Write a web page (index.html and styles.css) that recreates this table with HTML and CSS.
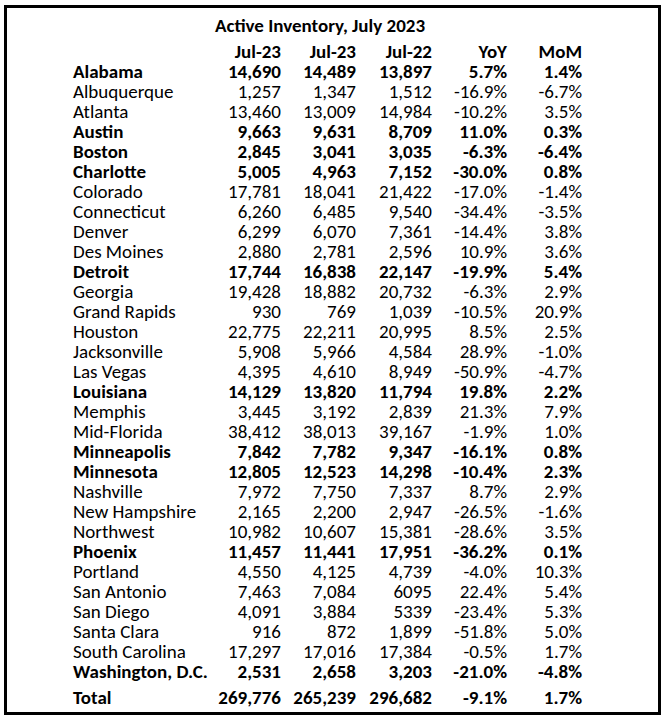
FILE: index.html
```html
<!DOCTYPE html>
<html>
<head>
<meta charset="utf-8">
<link rel="stylesheet" href="styles.css">
</head>
<body>
<div class="frame">
  <div class="title">Active Inventory, July 2023</div>
  <table class="inv">
    <colgroup><col class="c-name"><col class="c-num"><col class="c-num"><col class="c-num3"><col class="c-num"><col class="c-num"></colgroup>
    <thead>
      <tr class="b"><th class="name"></th><th>Jul-23</th><th>Jul-23</th><th>Jul-22</th><th>YoY</th><th>MoM</th></tr>
    </thead>
    <tbody>
      <tr class="b"><td class="name">Alabama</td><td>14,690</td><td>14,489</td><td>13,897</td><td>5.7%</td><td>1.4%</td></tr>
      <tr><td class="name">Albuquerque</td><td>1,257</td><td>1,347</td><td>1,512</td><td>-16.9%</td><td>-6.7%</td></tr>
      <tr><td class="name">Atlanta</td><td>13,460</td><td>13,009</td><td>14,984</td><td>-10.2%</td><td>3.5%</td></tr>
      <tr class="b"><td class="name">Austin</td><td>9,663</td><td>9,631</td><td>8,709</td><td>11.0%</td><td>0.3%</td></tr>
      <tr class="b"><td class="name">Boston</td><td>2,845</td><td>3,041</td><td>3,035</td><td>-6.3%</td><td>-6.4%</td></tr>
      <tr class="b"><td class="name">Charlotte</td><td>5,005</td><td>4,963</td><td>7,152</td><td>-30.0%</td><td>0.8%</td></tr>
      <tr><td class="name">Colorado</td><td>17,781</td><td>18,041</td><td>21,422</td><td>-17.0%</td><td>-1.4%</td></tr>
      <tr><td class="name">Connecticut</td><td>6,260</td><td>6,485</td><td>9,540</td><td>-34.4%</td><td>-3.5%</td></tr>
      <tr><td class="name">Denver</td><td>6,299</td><td>6,070</td><td>7,361</td><td>-14.4%</td><td>3.8%</td></tr>
      <tr><td class="name">Des Moines</td><td>2,880</td><td>2,781</td><td>2,596</td><td>10.9%</td><td>3.6%</td></tr>
      <tr class="b"><td class="name">Detroit</td><td>17,744</td><td>16,838</td><td>22,147</td><td>-19.9%</td><td>5.4%</td></tr>
      <tr><td class="name">Georgia</td><td>19,428</td><td>18,882</td><td>20,732</td><td>-6.3%</td><td>2.9%</td></tr>
      <tr><td class="name">Grand Rapids</td><td>930</td><td>769</td><td>1,039</td><td>-10.5%</td><td>20.9%</td></tr>
      <tr><td class="name">Houston</td><td>22,775</td><td>22,211</td><td>20,995</td><td>8.5%</td><td>2.5%</td></tr>
      <tr><td class="name">Jacksonville</td><td>5,908</td><td>5,966</td><td>4,584</td><td>28.9%</td><td>-1.0%</td></tr>
      <tr><td class="name">Las Vegas</td><td>4,395</td><td>4,610</td><td>8,949</td><td>-50.9%</td><td>-4.7%</td></tr>
      <tr class="b"><td class="name">Louisiana</td><td>14,129</td><td>13,820</td><td>11,794</td><td>19.8%</td><td>2.2%</td></tr>
      <tr><td class="name">Memphis</td><td>3,445</td><td>3,192</td><td>2,839</td><td>21.3%</td><td>7.9%</td></tr>
      <tr><td class="name">Mid-Florida</td><td>38,412</td><td>38,013</td><td>39,167</td><td>-1.9%</td><td>1.0%</td></tr>
      <tr class="b"><td class="name">Minneapolis</td><td>7,842</td><td>7,782</td><td>9,347</td><td>-16.1%</td><td>0.8%</td></tr>
      <tr class="b"><td class="name">Minnesota</td><td>12,805</td><td>12,523</td><td>14,298</td><td>-10.4%</td><td>2.3%</td></tr>
      <tr><td class="name">Nashville</td><td>7,972</td><td>7,750</td><td>7,337</td><td>8.7%</td><td>2.9%</td></tr>
      <tr><td class="name">New Hampshire</td><td>2,165</td><td>2,200</td><td>2,947</td><td>-26.5%</td><td>-1.6%</td></tr>
      <tr><td class="name">Northwest</td><td>10,982</td><td>10,607</td><td>15,381</td><td>-28.6%</td><td>3.5%</td></tr>
      <tr class="b"><td class="name">Phoenix</td><td>11,457</td><td>11,441</td><td>17,951</td><td>-36.2%</td><td>0.1%</td></tr>
      <tr><td class="name">Portland</td><td>4,550</td><td>4,125</td><td>4,739</td><td>-4.0%</td><td>10.3%</td></tr>
      <tr><td class="name">San Antonio</td><td>7,463</td><td>7,084</td><td>6095</td><td>22.4%</td><td>5.4%</td></tr>
      <tr><td class="name">San Diego</td><td>4,091</td><td>3,884</td><td>5339</td><td>-23.4%</td><td>5.3%</td></tr>
      <tr><td class="name">Santa Clara</td><td>916</td><td>872</td><td>1,899</td><td>-51.8%</td><td>5.0%</td></tr>
      <tr><td class="name">South Carolina</td><td>17,297</td><td>17,016</td><td>17,384</td><td>-0.5%</td><td>1.7%</td></tr>
      <tr class="b"><td class="name">Washington, D.C.</td><td>2,531</td><td>2,658</td><td>3,203</td><td>-21.0%</td><td>-4.8%</td></tr>
      <tr class="b total"><td class="name">Total</td><td>269,776</td><td>265,239</td><td>296,682</td><td>-9.1%</td><td>1.7%</td></tr>
    </tbody>
  </table>
</div>
</body>
</html>
```

FILE: styles.css
```css
html, body {
  margin: 0;
  padding: 0;
  background: #fff;
}
body {
  padding: 5px 0 0 4px;
  font-family: Carlito, Lato, "Liberation Sans", sans-serif;
  font-size: 19px;
  color: #000;
}
.frame {
  box-sizing: border-box;
  width: 657px;
  height: 710px;
  border: 3px solid #000;
  padding: 7px 0 0 66px;
}
.title {
  font-weight: bold;
  width: 494px;
  text-align: center;
  height: 22px;
  line-height: 22px;
  margin-bottom: 5px;
}
.inv {
  border-collapse: collapse;
  table-layout: fixed;
  width: 509px;
}
.c-name { width: 133px; }
.c-num { width: 75px; }
.c-num3 { width: 76px; }
.inv th, .inv td {
  padding: 0;
  height: 20px;
  line-height: 20px;
  text-align: right;
  white-space: nowrap;
  overflow: visible;
}
.inv th { font-weight: bold; }
.inv .name { text-align: left; }
.b td { font-weight: bold; }
.total td {
  height: 24px;
  padding-top: 4px;
  vertical-align: middle;
}
```
